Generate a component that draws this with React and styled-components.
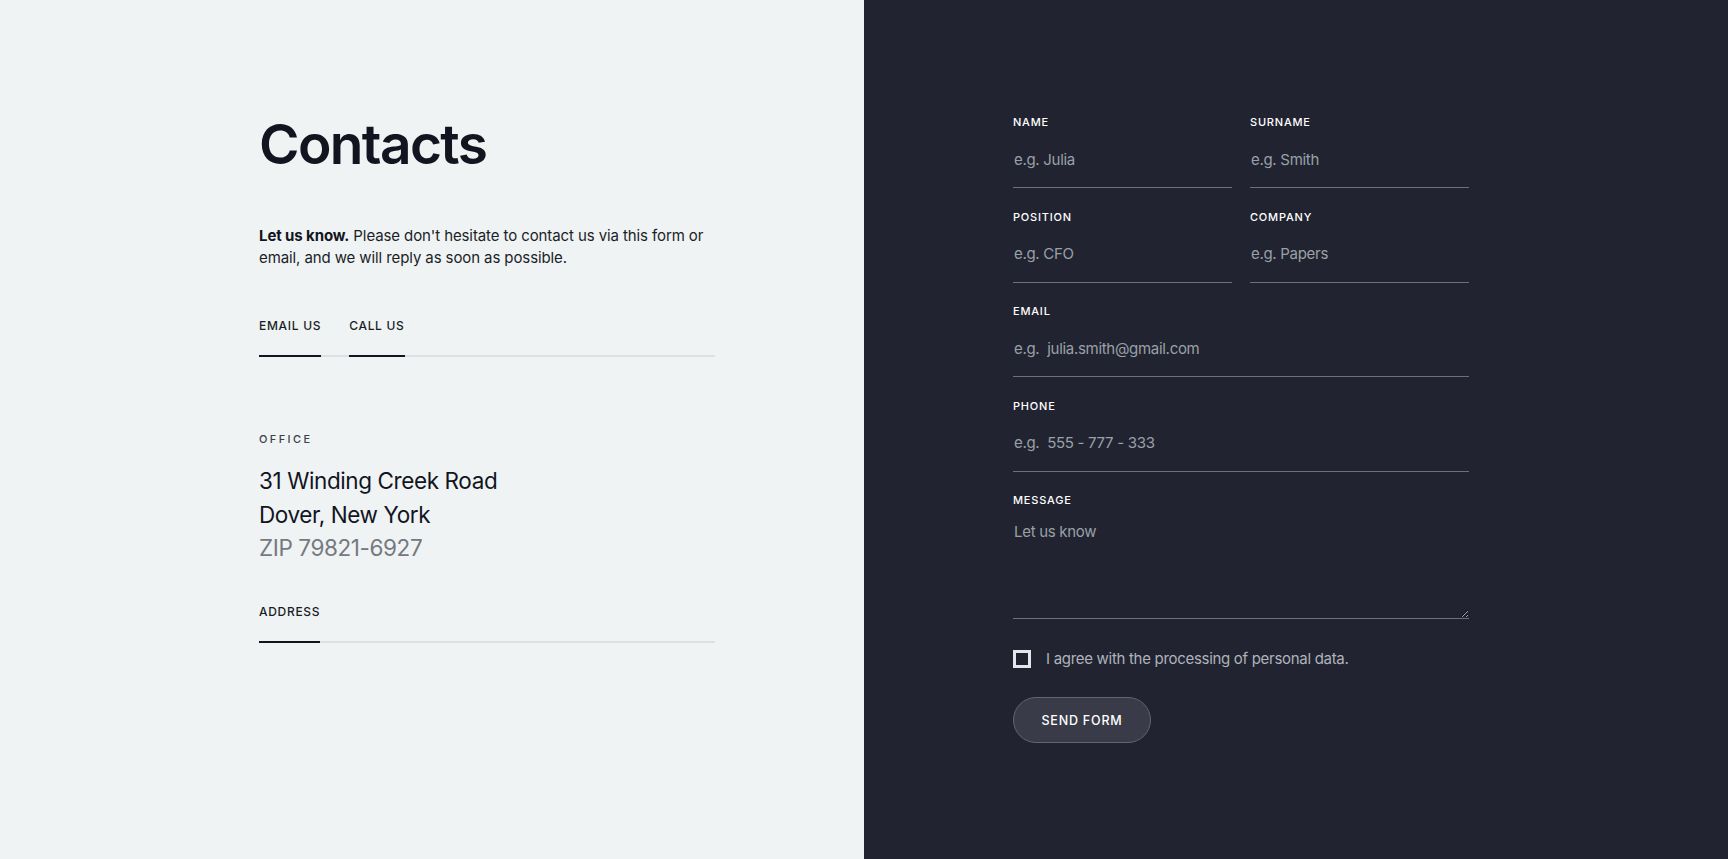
import React from 'react'
import styled, {createGlobalStyle} from 'styled-components'

const GlobalStyle = createGlobalStyle`
    * { box-sizing: border-box; }
    html, body { margin: 0; padding: 0; }
    body {
        font-family: Inter, "Noto Sans", sans-serif;
        -webkit-font-smoothing: antialiased;
    }
`

const App = () => {
    return (
        <>
            <GlobalStyle />
            <Page>
                <InfoPanel>
                    <InfoColumn>
                        <Title>Contacts</Title>
                        <Intro>
                            <strong>Let us know.</strong> Please don't hesitate to contact us via this form or
                            email, and we will reply as soon as possible.
                        </Intro>

                        <TabRow>
                            <Tab active>EMAIL US</Tab>
                            <Tab active>CALL US</Tab>
                        </TabRow>

                        <OfficeLabel>OFFICE</OfficeLabel>
                        <AddressLine>31 Winding Creek Road</AddressLine>
                        <AddressLine>Dover, New York</AddressLine>
                        <AddressLine muted>ZIP 79821-6927</AddressLine>

                        <TabRow compact>
                            <Tab active>ADDRESS</Tab>
                        </TabRow>
                    </InfoColumn>
                </InfoPanel>

                <FormPanel>
                    <Form onSubmit={e => e.preventDefault()}>
                        <FieldGrid>
                            <Field>
                                <Label>NAME</Label>
                                <Input placeholder="e.g. Julia" />
                            </Field>
                            <Field>
                                <Label>SURNAME</Label>
                                <Input placeholder="e.g. Smith" />
                            </Field>
                            <Field>
                                <Label>POSITION</Label>
                                <Input placeholder="e.g. CFO" />
                            </Field>
                            <Field>
                                <Label>COMPANY</Label>
                                <Input placeholder="e.g. Papers" />
                            </Field>
                            <Field wide>
                                <Label>EMAIL</Label>
                                <Input placeholder="e.g.  julia.smith@gmail.com" />
                            </Field>
                            <Field wide>
                                <Label>PHONE</Label>
                                <Input placeholder="e.g.  555 - 777 - 333" />
                            </Field>
                            <Field wide>
                                <Label>MESSAGE</Label>
                                <TextArea placeholder="Let us know" />
                            </Field>
                        </FieldGrid>

                        <AgreeRow>
                            <Checkbox type="checkbox" />
                            <AgreeText>I agree with the processing of personal data.</AgreeText>
                        </AgreeRow>

                        <SendButton type="submit">SEND FORM</SendButton>
                    </Form>
                </FormPanel>
            </Page>
        </>
    )
}

export default App


//page split in two halves
const Page = styled.div`
    display: grid;
    grid-template-columns: 1fr 1fr;
    width: 100%;
    min-height: 859px;
`

//left side
const InfoPanel = styled.section`
    background: #eff3f4;
    padding: 116px 0 0 259px;
`

const InfoColumn = styled.div`
    width: 456px;
    display: flex;
    flex-direction: column;
`

const Title = styled.h1`
    margin: 0;
    font-size: 55px;
    line-height: 56px;
    font-weight: 600;
    letter-spacing: -1.6px;
    color: #12151f;
`

const Intro = styled.p`
    margin: 53px 0 0;
    font-size: 15px;
    line-height: 22px;
    letter-spacing: -0.1px;
    color: #1b1e27;

    strong {
        font-weight: 700;
        color: #12151f;
    }
`

const TabRow = styled.div`
    display: flex;
    gap: 28px;
    margin-top: ${({compact}) => (compact ? '39px' : '49px')};
    border-bottom: 2px solid #dcdfe4;
`

const Tab = styled.div`
    font-size: 12px;
    line-height: 16px;
    font-weight: 500;
    letter-spacing: 0.7px;
    color: #1a1d26;
    padding-bottom: 21px;
    margin-bottom: -2px;
    border-bottom: 2px solid ${({active}) => (active ? '#12151f' : 'transparent')};
`

const OfficeLabel = styled.div`
    margin: 75px 0 18px;
    font-size: 11px;
    line-height: 14px;
    font-weight: 500;
    letter-spacing: 2.4px;
    color: #3d414b;
`

const AddressLine = styled.div`
    font-size: 22.5px;
    line-height: 33.5px;
    font-weight: 400;
    letter-spacing: -0.4px;
    color: ${({muted}) => (muted ? '#757980' : '#12151f')};
`

//right side
const FormPanel = styled.section`
    background: #212430;
    padding: 115px 0 0 149px;
`

const Form = styled.form`
    width: 456px;
    display: flex;
    flex-direction: column;
    align-items: flex-start;
`

const FieldGrid = styled.div`
    width: 100%;
    display: grid;
    grid-template-columns: 1fr 1fr;
    column-gap: 18px;
    row-gap: 21.5px;
`

const Field = styled.div`
    display: flex;
    flex-direction: column;
    grid-column: ${({wide}) => (wide ? '1 / -1' : 'auto')};
`

const Label = styled.label`
    font-size: 11px;
    line-height: 14px;
    font-weight: 500;
    letter-spacing: 0.8px;
    color: #ffffff;
    margin-bottom: 10px;
`

const Input = styled.input`
    width: 100%;
    height: 49px;
    padding: 10px 1px 18px;
    background: transparent;
    border: none;
    border-bottom: 1px solid #6c707b;
    outline: none;
    font-family: Inter, "Noto Sans", sans-serif;
    font-size: 15px;
    line-height: 20px;
    letter-spacing: -0.3px;
    color: #ffffff;

    &::placeholder {
        color: #9aa0a8;
    }
`

const TextArea = styled.textarea`
    width: 100%;
    height: 102px;
    padding: 5px 1px;
    background: transparent;
    border: none;
    border-bottom: 1px solid #6c707b;
    outline: none;
    font-family: Inter, "Noto Sans", sans-serif;
    font-size: 15px;
    line-height: 20px;
    letter-spacing: -0.3px;
    color: #ffffff;
    resize: vertical;

    &::placeholder {
        color: #9aa0a8;
    }
`

const AgreeRow = styled.label`
    display: flex;
    align-items: center;
    gap: 15px;
    margin-top: 30px;
`

const Checkbox = styled.input`
    appearance: none;
    margin: 0;
    width: 18px;
    height: 18px;
    border: 3px solid #e3e6ea;
    background: #212430;
`

const AgreeText = styled.span`
    font-size: 15px;
    line-height: 20px;
    letter-spacing: -0.3px;
    color: #afb3ba;
`

const SendButton = styled.button`
    margin-top: 28px;
    width: 138px;
    height: 46px;
    border-radius: 23px;
    border: 1px solid #62666f;
    background: #393c48;
    color: #ffffff;
    font-family: Inter, "Noto Sans", sans-serif;
    font-size: 12.5px;
    font-weight: 500;
    letter-spacing: 0.8px;
    cursor: pointer;
`
